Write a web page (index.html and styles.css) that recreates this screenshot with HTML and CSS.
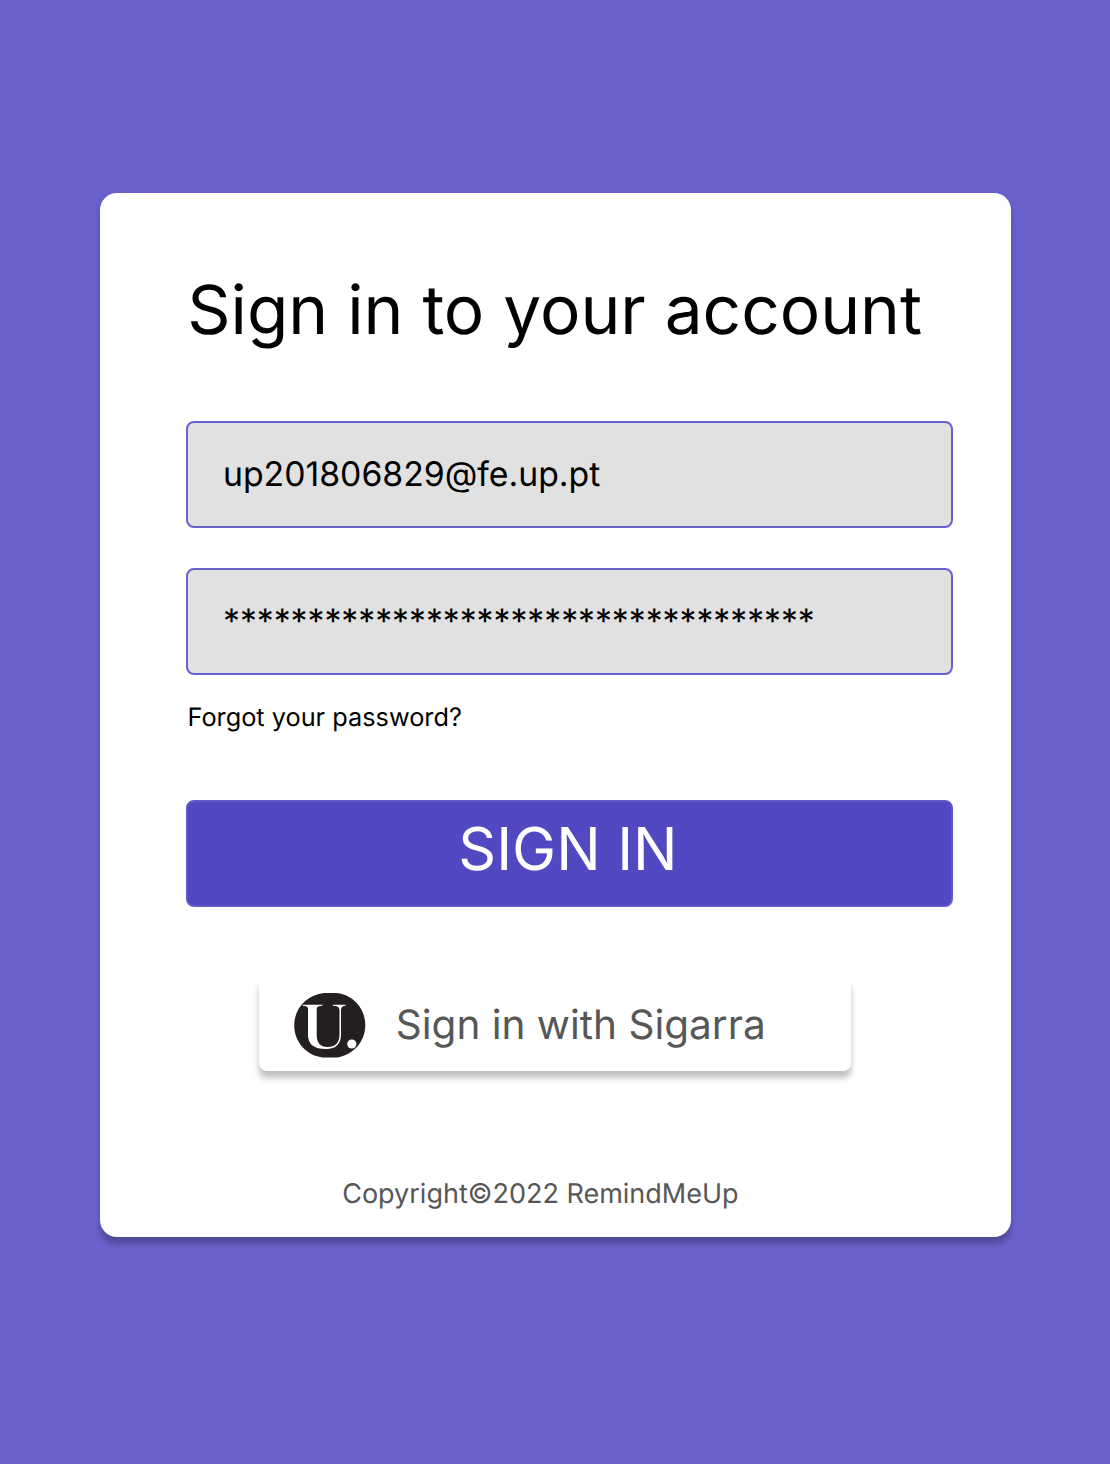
FILE: index.html
```html
<!DOCTYPE html>
<html lang="en">
<head>
<meta charset="utf-8">
<title>Sign in</title>
<link rel="stylesheet" href="styles.css">
</head>
<body>
<main class="card">
  <h1 class="title">Sign in to your account</h1>
  <div class="field field-email">up201806829@fe.up.pt</div>
  <div class="field field-password">***********************************</div>
  <a class="forgot">Forgot your password?</a>
  <button class="submit">SIGN IN</button>
  <button class="sigarra">
    <svg class="logo" viewBox="0 0 72 66" width="72" height="66">
      <path d="M30 1H42C58 2 71.300 16 71.300 33C71.300 50 59 63 43 65.500H29C13 64 0.200 50 0.200 33.500C0.200 16 13 3 30 1Z" fill="#231f20"/>
      <path d="M8.500 12.800H28.500V13.800Q22.700 13.800 22.700 17V43Q22.700 55 33.500 55Q45.500 55 45.500 42V18Q45.500 13.800 38.800 13.800V12.800H51.500V13.800Q47 14 47 18V42Q47 57 32 57Q14 57 14 43V17Q14 13.800 8.500 13.800Z" fill="#fff"/>
      <circle cx="57.800" cy="52" r="4.600" fill="#fff"/>
    </svg>
    <span class="sigarra-label">Sign in with Sigarra</span>
  </button>
  <footer class="copyright">Copyright©2022 RemindMeUp</footer>
</main>
</body>
</html>
```
FILE: styles.css
```css
* { box-sizing: border-box; }
body {
  margin: 0;
  min-height: 1464px;
  padding: 193px 98.800px 0 99.600px;
  background: #6962cc;
  font-family: Inter, "Liberation Sans", sans-serif;
  color: #000;
  text-rendering: geometricPrecision;
}
.card {
  display: flex;
  flex-direction: column;
  align-items: flex-start;
  height: 1044px;
  padding: 77px 58px 0 86.400px;
  background: #fff;
  border-radius: 17px;
  box-shadow: 0 6.750px 6.750px rgba(0, 0, 0, .25);
}
.title {
  margin: 0 0 69px 1.300px;
  font-size: 67.500px;
  font-weight: 400;
  line-height: 82px;
  white-space: nowrap;
}
.field {
  width: 767px;
  height: 107px;
  padding: 31px 35px;
  background: #e1e1e1;
  border: 2px solid #6962cc;
  border-radius: 8px;
  font-size: 33.750px;
  line-height: 41px;
  white-space: nowrap;
}
.field-password { margin-top: 40px; }
.forgot {
  margin: 27px 0 0 1.500px;
  font-size: 25.310px;
  line-height: 31px;
}
.submit {
  width: 767px;
  height: 107px;
  margin-top: 67px;
  padding: 0 3px 8px 0;
  background: #5149c2;
  border: 2px solid #6059c8;
  border-radius: 8px;
  color: #fff;
  font: 400 59.060px/72px Inter, sans-serif;
  text-rendering: inherit;
}
.sigarra {
  display: flex;
  align-items: center;
  width: 592px;
  height: 93px;
  margin: 71px 0 0 72.800px;
  padding: 0 0 0 35px;
  gap: 30px;
  background: #fff;
  border: 0;
  border-radius: 8px;
  box-shadow: 0 6.750px 6.750px rgba(0, 0, 0, .25);
  color: #575757;
  font: 400 40.500px/50px Inter, sans-serif;
  text-rendering: inherit;
}
.copyright {
  margin: 106px 0 0 156.200px;
  color: #575757;
  font-size: 27px;
  line-height: 33px;
}
```
